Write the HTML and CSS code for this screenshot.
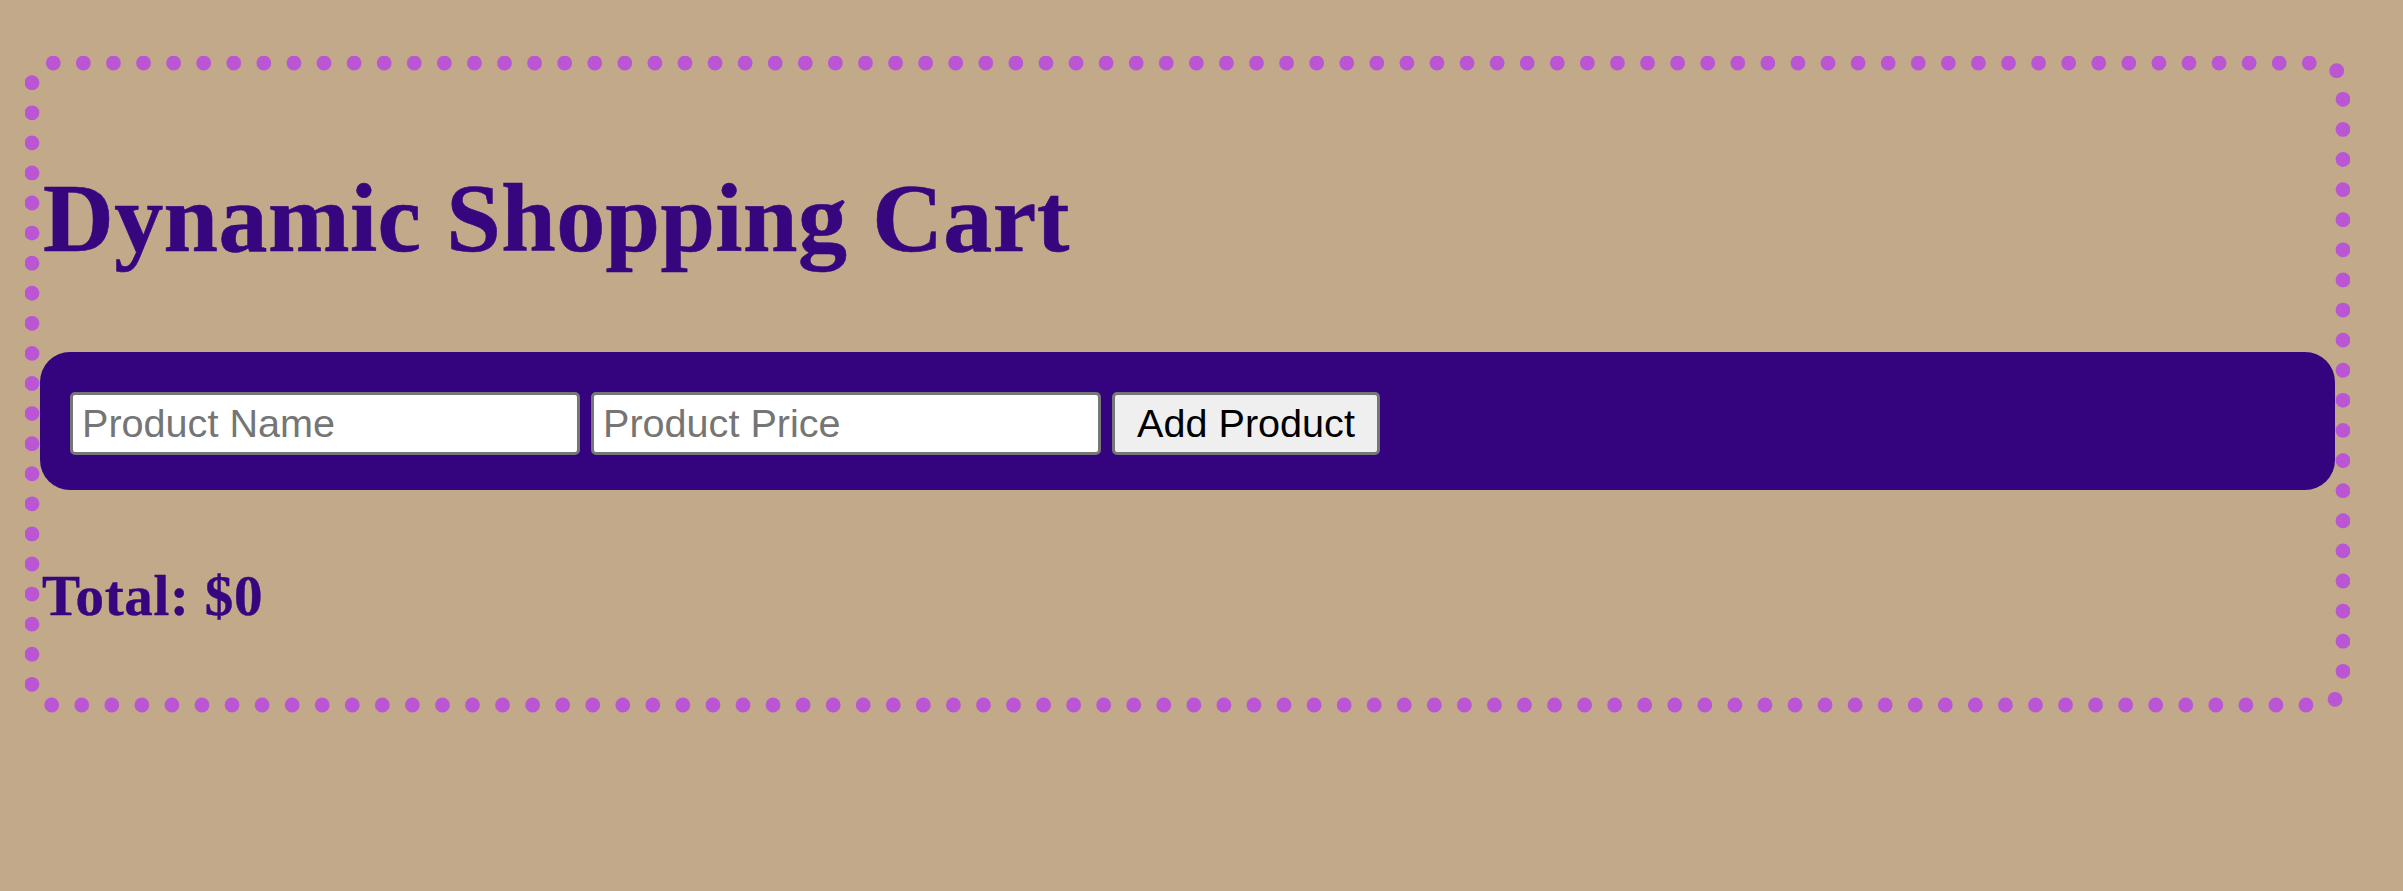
FILE: index.html
```html
<!DOCTYPE html>
<html lang="en">
<head>
<meta charset="utf-8">
<title>Dynamic Shopping Cart</title>
<link rel="stylesheet" href="styles.css">
</head>
<body>
<div class="cart">
  <svg class="frame" width="2325" height="657" viewBox="0 0 2325 657" aria-hidden="true">
    <g stroke="#ba55d3" stroke-width="14.8" stroke-linecap="round" fill="none">
      <line x1="28.3" y1="7" x2="2292" y2="7" stroke-dasharray="0 30.08"/>
      <line x1="2318" y1="43.3" x2="2318" y2="622" stroke-dasharray="0 30.105"/>
      <line x1="26.7" y1="649" x2="2288" y2="649" stroke-dasharray="0 30.057"/>
      <line x1="7" y1="26.7" x2="7" y2="636" stroke-dasharray="0 30.08"/>
    </g>
    <circle cx="2311.7" cy="14.7" r="7.4" fill="#ba55d3"/>
    <circle cx="2310" cy="643.3" r="7.4" fill="#ba55d3"/>
  </svg>
  <h1 class="title">Dynamic Shopping Cart</h1>
  <div class="form-bar">
    <input class="field" type="text" placeholder="Product Name">
    <input class="field" type="text" placeholder="Product Price">
    <button class="add-btn" type="button">Add Product</button>
  </div>
  <h2 class="total">Total: $0</h2>
</div>
</body>
</html>
```
FILE: styles.css
```css
html, body {
  margin: 0;
  padding: 0;
  background: #c1a98a;
}
body {
  width: 2403px;
  height: 891px;
  overflow: hidden;
  padding-top: 56px;
  box-sizing: border-box;
}
.cart {
  position: relative;
  box-sizing: border-box;
  margin-left: 25px;
  width: 2325px;
  height: 657px;
  padding: 15px;
  display: flow-root;
}
.frame {
  position: absolute;
  left: 0;
  top: 0;
  pointer-events: none;
}
.title {
  font-family: "Liberation Serif", "Times New Roman", serif;
  font-weight: bold;
  font-size: 98px;
  letter-spacing: 0.4px;
  -webkit-text-stroke: 0.6px #36067f;
  line-height: normal;
  color: #36067f;
  margin: 91px 0 78px 3px;
}
.form-bar {
  box-sizing: border-box;
  height: 138px;
  background: #34047f;
  border-radius: 30px;
  padding: 40px 30px 35px 30px;
  display: flex;
  gap: 11px;
  align-items: flex-start;
}
.field {
  box-sizing: border-box;
  width: 510px;
  height: 63px;
  margin: 0;
  border: 3px solid #767676;
  border-radius: 5px;
  background: #ffffff;
  padding: 0 9px;
  font-family: "Liberation Sans", Arial, sans-serif;
  font-size: 39.6px;
  color: #000;
}
.field::placeholder {
  color: #757575;
  opacity: 1;
}
.add-btn {
  box-sizing: border-box;
  width: 268px;
  height: 63px;
  margin: 0;
  border: 3px solid #767676;
  border-radius: 5px;
  background: #efefef;
  padding: 0 20px;
  font-family: "Liberation Sans", Arial, sans-serif;
  font-size: 39.6px;
  color: #000;
}
.total {
  font-family: "Liberation Serif", "Times New Roman", serif;
  font-weight: bold;
  font-size: 57px;
  letter-spacing: 0.7px;
  -webkit-text-stroke: 0.4px #36067f;
  line-height: normal;
  color: #36067f;
  margin: 73px 0 0 2px;
}
```
